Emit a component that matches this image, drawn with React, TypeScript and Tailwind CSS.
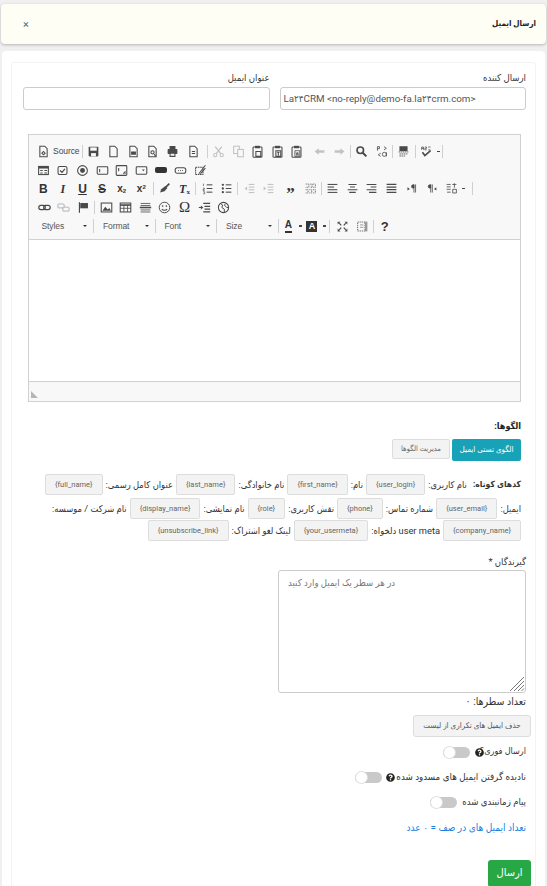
import React from "react";
import { FaQuestionCircle } from "react-icons/fa";

const C = "#4a4a4a";
type IP = { children: React.ReactNode; off?: boolean; w?: string };
const Ic = ({ children, off }: IP) => (
  <svg width="13" height="13" viewBox="0 0 16 16" fill="none" stroke={C} strokeWidth="1.3" className={off ? "opacity-30" : ""}>
    {children}
  </svg>
);
const Btn = ({ children }: { children: React.ReactNode }) => (
  <span className="w-[19.6px] h-[19px] flex items-center justify-center shrink-0">{children}</span>
);
const Sep = () => <span className="w-px h-[13px] bg-[#cfcfcf] mx-[1px] shrink-0" />;
const Arrow = () => <span className="w-[3px] h-[1.5px] bg-[#474747] ml-[1px] shrink-0" />;
const T = ({ c, cls }: { c: string; cls?: string }) => (
  <span className={`text-[12px] leading-none text-[#333] [font-family:'Liberation_Sans',sans-serif] ${cls ?? ""}`}>{c}</span>
);
const Lines = ({ ys }: { ys: [number, number][] }) => (
  <>{ys.map(([x, y], i) => <path key={i} d={`M${x} ${y}H14`} />)}</>
);

const Page = ({ children }: { children?: React.ReactNode }) => (
  <><path d="M3.5 1.5h6l3 3v10h-9z" />{children}</>
);
const Clip = ({ children }: { children?: React.ReactNode }) => (
  <><rect x="2.5" y="2.5" width="11" height="12.5" rx="1" fill="none" /><rect x="5" y="1" width="6" height="3" fill={C} stroke="none" />{children}</>
);

const Dropdown = ({ c }: { c: string }) => (
  <>
    <span className="w-[52.5px] h-[19px] pl-[5px] flex items-center justify-between pr-[2px] text-[8.5px] tracking-[-0.1px] text-[#555] [font-family:'Liberation_Sans',sans-serif] shrink-0">
      <span>{c}</span>
      <span className="w-0 h-0 border-x-[2px] border-x-transparent border-t-[2px] border-t-[#333]" />
    </span>
    <span className="w-px h-[14px] bg-[#cfcfcf] mx-[4px] shrink-0" />
  </>
);

const Row = ({ children }: { children: React.ReactNode }) => (
  <div className="flex items-center h-[18.7px]">{children}</div>
);

function Toolbar() {
  return (
    <div dir="ltr" className="bg-[#f8f8f8] h-[105px] border-b border-[#d1d1d1] pl-[4.5px] pt-[7px]">
      <Row>
        <Btn><Ic><Page /><path d="M6 10l2-2 2 2-2 2z" /></Ic></Btn>
        <span className="text-[8.5px] tracking-[-0.1px] text-[#474747] w-[25px] shrink-0 [font-family:'Liberation_Sans',sans-serif]">Source</span>
        <span className="w-[3px]" />
        <Sep />
        <Btn><Ic><rect x="2" y="2" width="12" height="12" rx="1" fill={C} stroke="none" /><rect x="4" y="3" width="8" height="4" fill="#f8f8f8" stroke="none" /><rect x="5" y="10" width="6" height="4" fill="#f8f8f8" stroke="none" /></Ic></Btn>
        <Btn><Ic><Page /></Ic></Btn>
        <Btn><Ic><Page /><path d="M5 9h6M5 11h6" strokeWidth="2" /></Ic></Btn>
        <Btn><Ic><Page /><circle cx="8" cy="9" r="2" /><path d="M10 11l2 3" /></Ic></Btn>
        <Btn><Ic><path d="M5 2h6v3H5z" fill={C} /><rect x="2" y="5" width="12" height="6" rx="1" fill={C} stroke="none" /><path d="M5 10h6v4H5z" fill="#f8f8f8" /></Ic></Btn>
        <span className="w-[2px]" />
        <Btn><Ic><Page /><path d="M6 8h4M6 10.5h4" /></Ic></Btn>
        <span className="w-[2px]" />
        <Sep />
        <Btn><Ic off><path d="M4 2l7 9M12 2l-7 9" strokeWidth="1.6" /><circle cx="4" cy="12.5" r="2" /><circle cx="12" cy="12.5" r="2" /></Ic></Btn>
        <Btn><Ic off><rect x="2" y="1.5" width="7" height="9" /><rect x="7" y="5.5" width="7" height="9" fill="#f8f8f8" /></Ic></Btn>
        <Btn><Ic><Clip /><path d="M6 8h6v6H6z" /></Ic></Btn>
        <Btn><Ic><Clip /><path d="M6 7h6v7H6zM7.5 9h3M9 9v4" /></Ic></Btn>
        <Btn><Ic><Clip /><path d="M6 7h6v7H6zM7.5 9l1 4 1-4 1 4" strokeWidth="1" /></Ic></Btn>
        <span className="w-[3px]" />
        <Btn><Ic off><path d="M7 4L2 8l5 4V9.5h7v-3H7z" fill={C} stroke="none" /></Ic></Btn>
        <Btn><Ic off><path d="M9 4l5 4-5 4V9.5H2v-3h7z" fill={C} stroke="none" /></Ic></Btn>
        <Sep />
        <Btn><Ic><circle cx="6.5" cy="6.5" r="4" strokeWidth="2" /><path d="M9.5 9.5L14 14" strokeWidth="2.6" /></Ic></Btn>
        <Btn><Ic><path d="M3 2v5M3 2h2.5v2.5H3M4 12l3-2M4 12l3 2M11 2l3 2-3 2" strokeWidth="1" /><circle cx="11.5" cy="11.5" r="2.5" strokeWidth="1" /><path d="M14 9v5" strokeWidth="1" /></Ic></Btn>
        <Sep />
        <Btn><Ic><rect x="3" y="1.5" width="10" height="6" fill={C} stroke="none" /><path d="M2 8.5h12M3 11h10M3 13.5h7" strokeWidth="1" strokeDasharray="2 0.6" /></Ic></Btn>
        <Sep />
        <Btn><Ic><path d="M2 6V2.5h2.4V6M2 4.3h2.4M6 2.5h2v1.6H6V6h2.2M10 6h3M10 2.5h3" strokeWidth=".9" /><path d="M3 9l3 4 7-6" strokeWidth="2" /></Ic></Btn>
        <Arrow />
        <span className="w-[1px]" />
        <Sep />
      </Row>
      <Row>
        <Btn><Ic><rect x="2" y="3" width="12" height="10" fill="none" /><rect x="2" y="3" width="12" height="2.6" fill={C} stroke="none" /><path d="M4 8h3M4 11h3M9 8h3.5M9 11h3.5" /></Ic></Btn>
        <Btn><Ic><rect x="2.5" y="3" width="11" height="10" rx="2" /><path d="M5 8l2.4 2.4L11 6" strokeWidth="1.5" /></Ic></Btn>
        <Btn><Ic><circle cx="8" cy="8" r="6" /><circle cx="8" cy="8" r="3" fill={C} stroke="none" /></Ic></Btn>
        <Btn><Ic><rect x="1.5" y="3.5" width="13" height="9" rx="1" /><path d="M4.5 6v4" /></Ic></Btn>
        <Btn><Ic><rect x="1.5" y="2" width="13" height="12" rx="1" /><path d="M4.5 5v4M10 12l3-3M12 12l1-1" /></Ic></Btn>
        <Btn><Ic><rect x="1.5" y="3.5" width="13" height="9" rx="1" /><path d="M8.5 6.8h3.5L10.2 9z" fill={C} stroke="none" /></Ic></Btn>
        <Btn><span className="w-[12px] h-[6px] rounded-[2px] bg-[#333]" /></Btn>
        <Btn><Ic><rect x="1.5" y="4.5" width="13" height="7" rx="2.5" /><path d="M5 8h1M7.5 8h1M10 8h1" strokeWidth="1.5" /></Ic></Btn>
        <Btn><Ic><path d="M2 4h9v9H2z" strokeDasharray="2 .8" /><path d="M6 12L14 1.5M8 12l6-7" /></Ic></Btn>
      </Row>
      <Row>
        <Btn><T c="B" cls="font-bold" /></Btn>
        <Btn><span className="text-[12px] leading-none text-[#333] font-bold italic [font-family:'Liberation_Serif',serif]">I</span></Btn>
        <Btn><T c="U" cls="font-bold underline" /></Btn>
        <Btn><T c="S" cls="font-bold line-through" /></Btn>
        <Btn><span className="text-[10px] font-bold leading-none text-[#333] [font-family:'Liberation_Sans',sans-serif]">x<sub className="text-[6px]">2</sub></span></Btn>
        <Btn><span className="text-[10px] font-bold leading-none text-[#333] [font-family:'Liberation_Sans',sans-serif]">x<sup className="text-[6px]">2</sup></span></Btn>
        <span className="w-[1px]" />
        <Sep />
        <Btn><Ic><path d="M14 2L9 7" strokeWidth="2" /><path d="M9 5l2.5 2.5L8 11.5 2.5 13 4 9z" fill={C} stroke="none" /></Ic></Btn>
        <Btn><span className="text-[12px] leading-none text-[#333] italic font-bold [font-family:'Liberation_Serif',serif]">T<sub className="text-[7px] not-italic">x</sub></span></Btn>
        <Sep />
        <Btn><Ic><Lines ys={[[7, 3.5], [7, 8], [7, 12.5]]} /><path d="M3 2v3M2.5 7.5h1.6v1.5H2.5v1.5h2M2.5 12h2v2.5h-2" strokeWidth=".8" /></Ic></Btn>
        <Btn><Ic><Lines ys={[[7, 3.5], [7, 8], [7, 12.5]]} /><circle cx="3.5" cy="3.5" r="1.4" fill={C} stroke="none" /><circle cx="3.5" cy="8" r="1.4" fill={C} stroke="none" /><circle cx="3.5" cy="12.5" r="1.4" fill={C} stroke="none" /></Ic></Btn>
        <Sep />
        <Btn><Ic off><Lines ys={[[7, 3], [7, 6.3], [7, 9.6], [7, 13]]} /><path d="M5 5.5L2 8l3 2.5z" fill={C} stroke="none" /></Ic></Btn>
        <Btn><Ic off><Lines ys={[[7, 3], [7, 6.3], [7, 9.6], [7, 13]]} /><path d="M2 5.5L5 8l-3 2.5z" fill={C} stroke="none" /></Ic></Btn>
        <span className="w-[2px]" />
        <Btn><span className="text-[17px] font-bold leading-none text-[#333] h-[7px] [font-family:'Liberation_Serif',serif]">”</span></Btn>
        <Btn><Ic><path d="M2 2.5h4v4H2M7.5 2.5H10v4H7.5M11 2.5h3v4h-3M2 9.5h3v4H2M6.5 9.5h3v4h-3M11 9.5h3v4h-3" strokeWidth=".9" strokeDasharray="1.4 .8" /></Ic></Btn>
        <Sep />
        <Btn><Ic><Lines ys={[[2, 3], [2, 9.5], [2, 12.8]]} /><path d="M2 6.2h8" /></Ic></Btn>
        <Btn><Ic><path d="M3 3h10M5 6.2h6M2 9.5h12M4 12.8h8" /></Ic></Btn>
        <Btn><Ic><path d="M2 3h12M7 6.2h7M2 9.5h12M5 12.8h9" /></Ic></Btn>
        <Btn><Ic><path d="M2 3h12M2 6.2h12M2 9.5h12M2 12.8h12" strokeWidth="1.5" /></Ic></Btn>
        <span className="w-[1px]" />
        <Btn><Ic><path d="M11 3.5h-1a2 2 0 000 4h1zM11 3v10M13 3v10" strokeWidth="1" fill={C} /><path d="M3 6.5L6 8.5 3 10.5z" fill={C} stroke="none" /></Ic></Btn>
        <Btn><Ic><path d="M7 3.5H6a2 2 0 000 4h1zM7 3v10M9 3v10" strokeWidth="1" fill={C} /><path d="M14 6.5L11 8.5l3 2z" fill={C} stroke="none" /></Ic></Btn>
        <Btn><Ic><path d="M2 3h5M2 6h5M2 9h5M2.5 12.5h4.5M9 3h5M11.5 1.5V7M9.5 9h4.5v4.5H9.5z" strokeWidth="1" /></Ic></Btn>
        <Arrow />
        <span className="w-[6px]" />
        <Sep />
      </Row>
      <Row>
        <span className="w-[1px]" />
        <Btn><Ic><rect x="1" y="5.5" width="8" height="5" rx="2.5" strokeWidth="1.5" /><rect x="7" y="5.5" width="8" height="5" rx="2.5" strokeWidth="1.5" /></Ic></Btn>
        <Btn><Ic off><rect x="1" y="3.5" width="8" height="5" rx="2.5" strokeWidth="1.5" /><rect x="7" y="7.5" width="8" height="5" rx="2.5" strokeWidth="1.5" /></Ic></Btn>
        <Btn><Ic><path d="M3 1.5v13" strokeWidth="1.4" /><path d="M4 2.5h9.5v6.5H4z" fill={C} stroke="none" /></Ic></Btn>
        <Sep />
        <Btn><Ic><rect x="1.5" y="2.5" width="13" height="11" /><path d="M3 12l3.5-5 3 3.5 2-2 2 3.5z" fill={C} stroke="none" /></Ic></Btn>
        <Btn><Ic><rect x="1.5" y="2.5" width="13" height="11" /><path d="M1.5 5h13" strokeWidth="2" /><path d="M1.5 9h13M6 5v8.5M10.5 5v8.5" strokeWidth="1" /></Ic></Btn>
        <Btn><Ic><path d="M2 3h12M2 5.5h12" strokeWidth="1" /><path d="M1 8h14" strokeWidth="2" /><path d="M2 11h12M2 13.5h12" strokeWidth="1" /></Ic></Btn>
        <Btn><Ic><circle cx="8" cy="8" r="6.5" strokeWidth="1.2" /><circle cx="5.7" cy="6.3" r="1" fill={C} stroke="none" /><circle cx="10.3" cy="6.3" r="1" fill={C} stroke="none" /><path d="M4.8 10c1.4 2 5 2 6.4 0" /></Ic></Btn>
        <Btn><span className="text-[15px] leading-none text-[#333] [font-family:'Liberation_Serif',serif]">Ω</span></Btn>
        <Btn><Ic><path d="M6.5 3H15M8 6.5h7M8 10h7M6.5 13.5H15" strokeWidth="1.5" /><path d="M1 8h3" /><path d="M3.5 5.5L6.5 8l-3 2.5z" fill={C} stroke="none" /></Ic></Btn>
        <Btn><Ic><circle cx="8" cy="8" r="6.3" /><path d="M4 3l3 2-1 3 3 2v4M11 3L9 5l3 3h2" strokeWidth="1.2" /></Ic></Btn>
      </Row>
      <Row>
        <span className="w-[3px]" />
        <Dropdown c="Styles" />
        <Dropdown c="Format" />
        <Dropdown c="Font" />
        <Dropdown c="Size" />
        <span className="-ml-[4px]" />
        <Btn><span className="text-[10px] font-bold text-[#333] leading-none border-b-2 border-[#333] pb-[1px] [font-family:'Liberation_Sans',sans-serif]">A</span></Btn>
        <Arrow />
        <Btn><span className="w-[11px] h-[11px] bg-[#333] text-white text-[9px] font-bold leading-[11px] text-center [font-family:'Liberation_Sans',sans-serif]">A</span></Btn>
        <Arrow />
        <span className="w-[2px]" />
        <Sep />
        <span className="w-[2px]" />
        <Btn><Ic><path d="M2 2h3.5L2 5.5zM14 2v3.5L10.5 2zM2 14v-3.5L5.5 14zM14 14h-3.5l3.5-3.5z" fill={C} stroke="none" /><path d="M4 4l2.5 2.5M12 4L9.5 6.5M4 12l2.5-2.5M12 12L9.5 9.5" strokeWidth="1.4" /></Ic></Btn>
        <Btn><Ic off={false}><path d="M2 2.5h9v11H2z" strokeDasharray="1.5 1" strokeWidth="1" /><path d="M11 2h3v12h-3z" fill="#999" stroke="none" /><path d="M5 6h4M5 9h4" strokeWidth="1" stroke="#888" /></Ic></Btn>
        <Sep />
        <Btn><span className="text-[13px] font-bold text-[#333] leading-none [font-family:'Liberation_Sans',sans-serif]">?</span></Btn>
      </Row>
    </div>
  );
}

const Chip = ({ c }: { c: string }) => (
  <span dir="ltr" className="inline-flex items-center justify-center h-[21px] px-[9px] bg-[#f3f3f3] border border-[#dddddd] rounded-[2px] text-[7.5px] text-[#666] shrink-0 whitespace-nowrap">
    {c}
  </span>
);
const ScRow = ({ children, cls }: { children: React.ReactNode; cls: string }) => (
  <div className={`flex items-center text-[9.3px] text-[#333] whitespace-nowrap ${cls}`}>{children}</div>
);

const Toggle = ({ cls }: { cls?: string }) => (
  <span className={`relative inline-block w-[27px] h-[11px] rounded-full bg-[#c9c9c9] shrink-0 ${cls ?? ""}`}>
    <span className="absolute left-0 top-[-1px] w-[13px] h-[13px] rounded-full bg-white border border-[#dedede]" />
  </span>
);
const Q = ({ cls }: { cls?: string }) => <FaQuestionCircle className={`text-[#222] text-[9px] shrink-0 ${cls ?? ""}`} />;

export default function App() {
  return (
    <div dir="rtl" className="w-[547px] h-[886px] overflow-hidden bg-[#f0f0f0] pt-[4px] text-[#333] [font-family:Roboto,'DejaVu_Sans_Condensed','DejaVu_Sans',sans-serif]">
      <div className="mx-[1px] h-[40px] bg-[#fffef4] rounded-[4px] shadow-[0_1px_3px_rgba(0,0,0,0.25)] flex items-center justify-between pr-[10px] pl-[22px]">
        <h1 className="text-[8px] font-bold text-[#222]">ارسال ایمیل</h1>
        <span className="text-[11px] text-[#666] leading-none">×</span>
      </div>

      <div className="mx-[2px] mt-[7px] h-[900px] bg-white rounded-[4px] pt-[11px] pr-[9px] pl-[9px]">
        <div className="h-[900px] border border-[#f3f3f3] rounded-[3px] pt-[6px] pr-[9px] pl-[11px]">
          <div className="flex gap-[10px]">
            <label className="flex-1 flex flex-col">
              <span className="text-[9.5px] leading-[17px] h-[18px] text-[#333]">ارسال کننده</span>
              <input dir="ltr" readOnly value="La۲۴CRM <no-reply@demo-fa.la۲۴crm.com>" className="w-full h-[23px] px-[3px] border border-[#ccc] rounded-[3px] text-[9.8px] text-[#555] bg-white outline-none" />
            </label>
            <label className="flex-1 flex flex-col">
              <span className="text-[9.5px] leading-[17px] h-[18px] text-[#333]">عنوان ایمیل</span>
              <input readOnly className="w-full h-[23px] px-[4px] border border-[#ccc] rounded-[3px] bg-white outline-none" />
            </label>
          </div>

          <div className="mt-[24px] ml-[5px] mr-[5px] border border-[#d1d1d1]">
            <Toolbar />
            <div className="h-[141px] bg-white" />
            <div className="h-[20px] bg-[#f8f8f8] border-t border-[#d1d1d1] relative">
              <svg className="absolute left-[2px] bottom-[3px]" width="7" height="7" viewBox="0 0 7 7"><path d="M0 0v7h7z" fill="#b5b5b5" /></svg>
            </div>
          </div>

          <div className="mr-[5px]">
            <div className="mt-[17px] text-[9px] font-bold h-[14px] leading-[14px] text-[#222]">الگوها:</div>
            <div className="flex items-start gap-[2px] mt-[6px]">
              <span className="w-[69px] h-[22px] bg-[#17a2b8] text-white text-[8px] flex items-center justify-center rounded-[2px]">الگوی تستی ایمیل</span>
              <span className="w-[58px] h-[20px] bg-[#f3f3f3] border border-[#dddddd] text-[#666] text-[7.5px] flex items-center justify-center rounded-[2px]">مدیریت الگوها</span>
            </div>
            <div className="mt-[13px]">
              <ScRow cls="gap-[3px]">
                <b className="font-bold text-[8.5px] ml-[3px]">کدهای کوتاه:</b><span>نام کاربری:</span><Chip c="{user_login}" /><span>نام:</span><Chip c="{first_name}" /><span>نام خانوادگی:</span><Chip c="{last_name}" /><span>عنوان کامل رسمی:</span><Chip c="{full_name}" />
              </ScRow>
              <ScRow cls="gap-[3px] mt-[3px]">
                <span>ایمیل:</span><Chip c="{user_email}" /><span>شماره تماس:</span><Chip c="{phone}" /><span>نقش کاربری:</span><Chip c="{role}" /><span>نام نمایشی:</span><Chip c="{display_name}" /><span>نام شرکت / موسسه:</span>
              </ScRow>
              <ScRow cls="gap-[3px] mt-[1px]">
                <Chip c="{company_name}" /><span>user meta دلخواه:</span><Chip c="{your_usermeta}" /><span>لینک لغو اشتراک:</span><Chip c="{unsubscribe_link}" />
              </ScRow>
            </div>
          </div>

          <div className="mt-[13px] w-[248px] relative">
            <div className="text-[9.5px] h-[16px] leading-[16px] text-[#333]">گیرندگان *</div>
            <textarea dir="ltr" readOnly placeholder="در هر سطر یک ایمیل وارد کنید" className="block w-[248px] h-[123px] resize-none border border-[#ccc] rounded-[3px] px-[9px] py-[4px] text-[9.5px] leading-[16px] outline-none placeholder:text-[#777]" />
            <svg className="absolute left-[231px] bottom-[1px]" width="16" height="16" viewBox="0 0 16 16" stroke="#777" strokeWidth="1"><path d="M1 15L15 1M5 15L15 5M9 15l6-6M12.5 15l2.5-2.5" /></svg>
          </div>
          <div className="mt-[1px] text-[10.5px] leading-[16px] h-[16px]">تعداد سطرها: ۰</div>
          <div className="mt-[5px] -mr-[5px] w-[118px] h-[22px] bg-[#f3f3f3] border border-[#dddddd] rounded-[3px] text-[8px] text-[#555] flex items-center justify-center whitespace-nowrap">حذف ایمیل های تکراری از لیست</div>

          <div className="mt-[7px] h-[16px] flex items-center text-[9px] whitespace-nowrap"><span>ارسال فوری؟</span><Q cls="-mr-[4px]" /><Toggle cls="mr-[5px]" /></div>
          <div className="mt-[9px] h-[16px] flex items-center text-[9.7px] whitespace-nowrap"><span>نادیده گرفتن ایمیل های مسدود شده</span><Q cls="mr-[1px]" /><Toggle cls="mr-[4px]" /></div>
          <div className="mt-[9px] h-[16px] flex items-center text-[9.5px] whitespace-nowrap"><span>پیام زمانبندی شده</span><Toggle cls="mr-[5px]" /></div>
          <div className="mt-[10px] h-[16px] leading-[16px] text-[10px] text-[#1a7fe0] whitespace-nowrap">تعداد ایمیل های در صف = ۰ عدد</div>
          <div className="mt-[24px] -mr-[5px] w-[43px] h-[27px] bg-[#28a745] text-white text-[11px] font-medium rounded-[3px] flex items-center justify-center">ارسال</div>
        </div>
      </div>
    </div>
  );
}
